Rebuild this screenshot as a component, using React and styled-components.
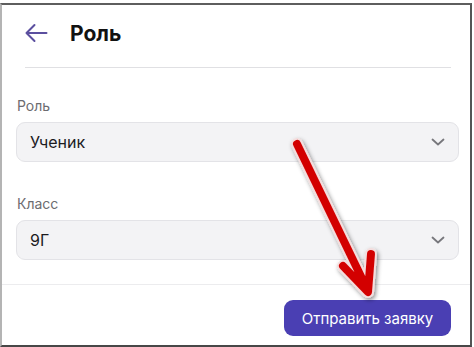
import React from "react";
import styled, { createGlobalStyle } from "styled-components";

const Global = createGlobalStyle`
  html, body { margin: 0; padding: 0; background: #fff; }
  body { font-family: Inter, "Noto Sans", sans-serif; }
`;

const Page = styled.div`
  position: relative;
  width: 474px;
  height: 347px;
  padding-top: 3px;
  box-sizing: border-box;
`;

const Frame = styled.div`
  width: 472px;
  height: 344px;
  box-sizing: border-box;
  border-top: 2px solid #5e5e5e;
  border-left: 2px solid #b4b4b4;
  border-right: 2px solid #555;
  border-bottom: 2px solid #474747;
  display: flex;
  flex-direction: column;
  background: #fff;
`;

const Header = styled.div`
  height: 56px;
  display: flex;
  align-items: center;
  gap: 22px;
  padding-left: 22px;
`;

const BackButton = styled.button`
  border: 0;
  background: none;
  padding: 0;
  width: 24px;
  height: 24px;
  display: flex;
  align-items: center;
  justify-content: center;
  cursor: pointer;
`;

const Title = styled.h1`
  margin: 0;
  font-size: 21px;
  font-weight: 700;
  color: #121212;
`;

const Divider = styled.div`
  height: 1px;
  background: ${(p) => (p.$full ? "#ececee" : "#e0e0e3")};
  margin: ${(p) => (p.$full ? "0" : "6px 19px 0 23px")};
`;

const Body = styled.div`
  flex: 1;
  padding: 29px 11px 0 14px;
  display: flex;
  flex-direction: column;
`;

const Field = styled.div`
  display: flex;
  flex-direction: column;
  gap: 8px;
  margin-bottom: ${(p) => p.$mb || 0}px;
`;

const Label = styled.label`
  font-size: 14px;
  line-height: 17px;
  color: #6c6c70;
  padding-left: 1px;
`;

const Select = styled.div`
  height: 40px;
  box-sizing: border-box;
  border: 1px solid #e3e3e7;
  border-radius: 9px;
  background: #f3f3f5;
  display: flex;
  align-items: center;
  justify-content: space-between;
  padding: 0 13px 0 13px;
  font-size: 16px;
  color: #1b1b1f;
`;

const Footer = styled.div`
  display: flex;
  justify-content: flex-end;
  padding: 15px 19px 9px 0;
`;

const Submit = styled.button`
  width: 167px;
  height: 36px;
  border: 0;
  border-radius: 9px;
  background: #4a3fb3;
  color: #fff;
  font-family: Inter, "Noto Sans", sans-serif;
  font-size: 15px;
  font-weight: 400;
  cursor: pointer;
`;

const Overlay = styled.svg`
  position: absolute;
  left: 0;
  top: 0;
  pointer-events: none;
`;

const Chevron = () => (
  <svg width="14" height="8" viewBox="0 0 14 8">
    <path d="M1.5 1.5 L7 6.5 L12.5 1.5" fill="none" stroke="#77777c" strokeWidth="1.8" strokeLinecap="round" strokeLinejoin="round" />
  </svg>
);

const ArrowLeft = () => (
  <svg width="24" height="20" viewBox="0 0 24 20">
    <path d="M22.5 10 H2.5 M10.5 2 L2.5 10 L10.5 18" fill="none" stroke="#5b4f9f" strokeWidth="2" strokeLinecap="round" strokeLinejoin="round" />
  </svg>
);

export default function App() {
  return (
    <>
      <Global />
      <Page>
        <Frame>
          <Header>
            <BackButton aria-label="Назад"><ArrowLeft /></BackButton>
            <Title>Роль</Title>
          </Header>
          <Divider />
          <Body>
            <Field $mb={33}>
              <Label>Роль</Label>
              <Select>
                <span>Ученик</span>
                <Chevron />
              </Select>
            </Field>
            <Field>
              <Label>Класс</Label>
              <Select>
                <span>9Г</span>
                <Chevron />
              </Select>
            </Field>
          </Body>
          <Divider $full />
          <Footer>
            <Submit>Отправить заявку</Submit>
          </Footer>
        </Frame>
        <Overlay width="474" height="347" viewBox="0 0 474 347">
          <defs>
            <filter id="sh" x="-20%" y="-20%" width="140%" height="140%">
              <feDropShadow dx="1.5" dy="2" stdDeviation="2" floodColor="#000" floodOpacity="0.45" />
            </filter>
          </defs>
          <g filter="url(#sh)" fill="none" strokeLinecap="round" strokeLinejoin="round">
            <path d="M297 144 L368 291 M343 266 L368 292 L371 254" stroke="#f4dede" strokeWidth="12" />
            <path d="M297 144 L368 291 M343 266 L368 292 L371 254" stroke="#d30606" strokeWidth="8" />
          </g>
        </Overlay>
      </Page>
    </>
  );
}
